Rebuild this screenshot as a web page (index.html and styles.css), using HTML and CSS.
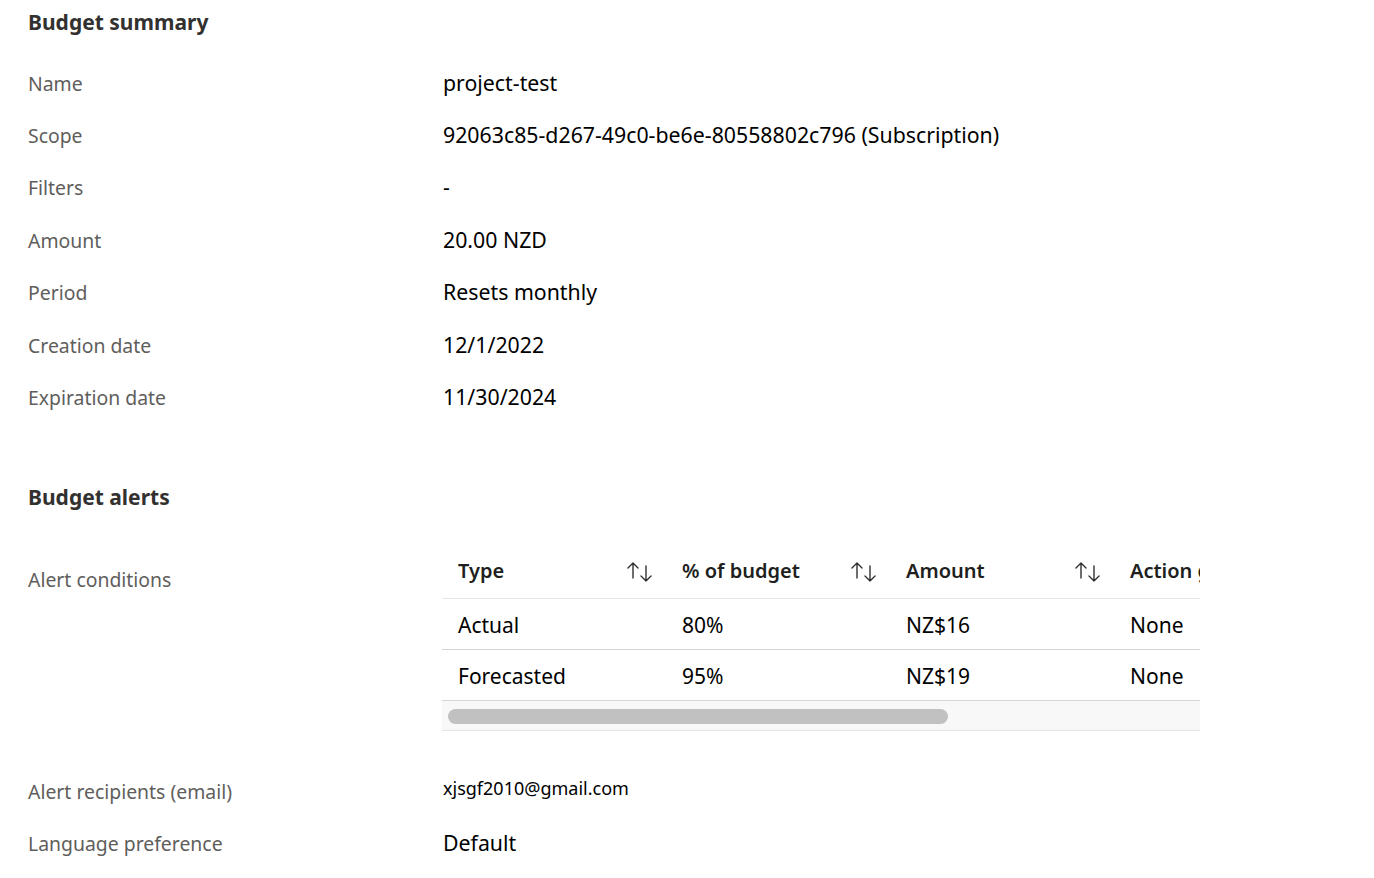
FILE: index.html
```html
<!DOCTYPE html>
<html lang="en">
<head>
<meta charset="utf-8">
<title>Budget summary</title>
<link rel="stylesheet" href="styles.css">
</head>
<body>
<main class="page">
  <h2 class="section-title">Budget summary</h2>
  <dl class="summary">
    <dt class="label">Name</dt><dd class="value">project-test</dd>
    <dt class="label">Scope</dt><dd class="value">92063c85-d267-49c0-be6e-80558802c796 (Subscription)</dd>
    <dt class="label">Filters</dt><dd class="value">-</dd>
    <dt class="label">Amount</dt><dd class="value">20.00 NZD</dd>
    <dt class="label">Period</dt><dd class="value">Resets monthly</dd>
    <dt class="label">Creation date</dt><dd class="value">12/1/2022</dd>
    <dt class="label">Expiration date</dt><dd class="value">11/30/2024</dd>
  </dl>

  <h2 class="section-title alerts-title">Budget alerts</h2>
  <div class="alerts">
    <div class="label conditions-label">Alert conditions</div>
    <div class="grid-wrap">
      <div class="grid">
        <div class="grid-row head">
          <div class="cell"><span>Type</span><svg class="sort" viewBox="0 0 26 24" width="26" height="24"><path d="M7 18V3M2 8l5-5 5 5M20 6v15M15 16l5 5 5-5"/></svg></div>
          <div class="cell"><span>% of budget</span><svg class="sort" viewBox="0 0 26 24" width="26" height="24"><path d="M7 18V3M2 8l5-5 5 5M20 6v15M15 16l5 5 5-5"/></svg></div>
          <div class="cell"><span>Amount</span><svg class="sort" viewBox="0 0 26 24" width="26" height="24"><path d="M7 18V3M2 8l5-5 5 5M20 6v15M15 16l5 5 5-5"/></svg></div>
          <div class="cell"><span>Action group</span><svg class="sort" viewBox="0 0 26 24" width="26" height="24"><path d="M7 18V3M2 8l5-5 5 5M20 6v15M15 16l5 5 5-5"/></svg></div>
        </div>
        <div class="grid-row">
          <div class="cell">Actual</div>
          <div class="cell">80%</div>
          <div class="cell">NZ$16</div>
          <div class="cell">None</div>
        </div>
        <div class="grid-row">
          <div class="cell">Forecasted</div>
          <div class="cell">95%</div>
          <div class="cell">NZ$19</div>
          <div class="cell">None</div>
        </div>
      </div>
      <div class="hscroll"><div class="thumb"></div></div>
    </div>
  </div>

  <dl class="summary extra">
    <dt class="label">Alert recipients (email)</dt><dd class="value email">xjsgf2010@gmail.com</dd>
    <dt class="label">Language preference</dt><dd class="value">Default</dd>
  </dl>
</main>
</body>
</html>
```

FILE: styles.css
```css
* { box-sizing: border-box; }

html, body {
  margin: 0;
  padding: 0;
  background: #ffffff;
}

body {
  font-family: "Noto Sans", "Open Sans", sans-serif;
  color: #201f1e;
}

.page {
  padding: 0 0 0 28px;
}

.section-title {
  margin: 0;
  height: 44px;
  line-height: 44px;
  font-size: 21px;
  font-weight: 700;
  color: #323130;
}

.summary {
  margin: 13px 0 0 0;
  display: grid;
  grid-template-columns: 415px 1fr;
  grid-auto-rows: 52.4px;
  align-items: center;
}

.label {
  font-size: 19.4px;
  color: #605e5c;
  margin: 0;
}

.value {
  font-size: 21.3px;
  color: #000000;
  margin: 0;
  padding-bottom: 2px;
}

.alerts-title {
  margin-top: 51px;
}

.alerts {
  margin-top: 25px;
  display: grid;
  grid-template-columns: 414px 758px;
  align-items: start;
}

.conditions-label {
  padding-top: 23px;
  line-height: 26px;
}

.grid-wrap {
  width: 758px;
  overflow: hidden;
}

.grid {
  width: 1150px;
}

.grid-row {
  display: grid;
  grid-template-columns: repeat(4, 224px) 1fr;
  height: 51px;
  align-items: center;
  border-bottom: 1px solid #d6d6d6;
  font-size: 21px;
  color: #000000;
}

.grid-row > .cell {
  padding-top: 2px;
}

.grid-row.head {
  height: 55px;
  border-bottom-color: #e6e6e6;
  font-weight: 600;
  font-size: 20px;
  color: #201f1e;
}

.grid-row.head > .cell {
  padding-top: 0;
}

.cell {
  padding: 0 14px 0 16px;
  display: flex;
  justify-content: space-between;
  align-items: center;
  white-space: nowrap;
}

.sort {
  flex: none;
  fill: none;
  stroke: #323130;
  stroke-width: 1.4;
  stroke-linecap: round;
  stroke-linejoin: round;
  margin-top: 3px;
}

.hscroll {
  height: 30px;
  background: #f8f8f8;
  border-bottom: 1px solid #e4e4e4;
  padding: 8px 0 0 6px;
}

.thumb {
  width: 500px;
  height: 15px;
  border-radius: 8px;
  background: #c1c1c1;
}

.summary.extra {
  margin-top: 35px;
  grid-auto-rows: 52px;
}

.value.email {
  font-size: 18px;
  align-self: start;
  padding-top: 10px;
}
```
